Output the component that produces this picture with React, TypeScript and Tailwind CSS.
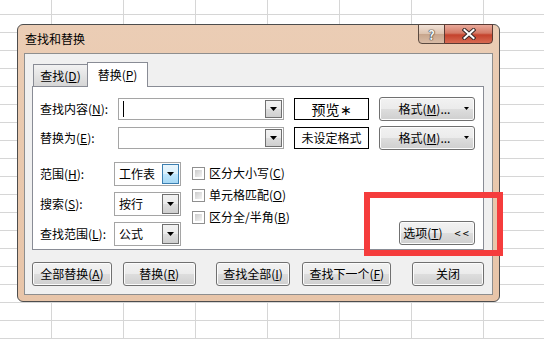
import React from "react";

const btnBase =
  "flex h-[24px] items-center justify-center rounded-[3px] border border-[#707070] bg-[linear-gradient(to_bottom,#f2f2f2_0%,#ebebeb_50%,#dddddd_51%,#cfcfcf_100%)] text-[12px] leading-none text-black shadow-[inset_0_0_0_1px_#fcfcfc]";

function DropArrow({ blue = false }: { blue?: boolean }) {
  return (
    <div
      className={
        blue
          ? "flex w-[17px] items-center justify-center border border-[#3c7fb1] bg-[linear-gradient(to_bottom,#eaf6fd_0%,#d9f0fc_50%,#bee6fd_51%,#a7d9f5_100%)]"
          : "flex w-[17px] items-center justify-center border border-[#707070] bg-[linear-gradient(to_bottom,#f2f2f2_0%,#ebebeb_50%,#dddddd_51%,#cfcfcf_100%)]"
      }
    >
      <svg width="7" height="4" viewBox="0 0 7 4">
        <path d="M0 0h7L3.5 4z" fill="#000" />
      </svg>
    </div>
  );
}

function Combo({ cursor = false }: { cursor?: boolean }) {
  return (
    <div className="flex h-[22px] w-[167px] border border-[#a5a5a5] bg-white p-px">
      <div className="flex flex-1 items-center pl-[3px]">
        {cursor && <div className="h-[16px] w-px bg-black" />}
      </div>
      <DropArrow />
    </div>
  );
}

function Select({ value, blue = false }: { value: string; blue?: boolean }) {
  return (
    <div className="flex h-[24px] w-[67px] border border-[#a5a5a5] bg-white p-px">
      <div className="flex flex-1 items-center pl-[3px] text-[12px] leading-none">{value}</div>
      <DropArrow blue={blue} />
    </div>
  );
}

function Check({ label, k }: { label: string; k: string }) {
  return (
    <div className="flex h-[22px] items-center gap-[4px] text-[12px] leading-none">
      <div className="h-[13px] w-[13px] border border-[#8f8f8f] bg-white p-[2px]">
        <div className="h-full w-full bg-[linear-gradient(135deg,#cbcbcb,#f4f4f4)]" />
      </div>
      <span>
        {label}(<u>{k}</u>)
      </span>
    </div>
  );
}

function FormatBtn() {
  return (
    <div className={btnBase + " relative h-[21px] w-[96px]"}>
      <span className="-ml-[5px]">
        格式(<u>M</u>)...
      </span>
      <svg className="absolute right-[5px] top-[9px]" width="5" height="3" viewBox="0 0 5 3">
        <path d="M0 0h5L2.5 3z" fill="#000" />
      </svg>
    </div>
  );
}

function Dialog() {
  return (
    <div className="flex h-[278px] w-[483px] flex-col rounded-[6px] border border-[#4d4d4d] bg-[linear-gradient(to_bottom,#ebcdb5,#e9c9ae_40%,#e8c5a9)] px-[6px] pb-[6px]">
      <div className="flex h-[28px] items-start justify-between">
        <span className="pl-px pt-[7px] text-[12px] leading-[14px] text-black">查找和替换</span>
        <div className="-mt-px flex h-[20px]">
          <div className="flex w-[27px] items-center justify-center rounded-bl-[4px] border border-[#5b4a40] bg-[linear-gradient(to_bottom,#f1e2d7,#dcc2ae_50%,#c7a58c_51%,#d9bca6)]">
            <span className="text-[13px] font-bold leading-none text-[#f4f4f4] [text-shadow:0_0_1px_#333,0_0_1px_#333,0_0_1px_#333]">
              ?
            </span>
          </div>
          <div className="-ml-px flex w-[49px] items-center justify-center rounded-br-[4px] border border-[#5b3a33] bg-[linear-gradient(to_bottom,#e9a99a,#d47a66_45%,#c4422c_55%,#d86a52)]">
            <svg width="14" height="12" viewBox="0 0 14 12">
              <path d="M2.5 2l9 8M11.5 2l-9 8" stroke="#3a2a28" strokeWidth="4" strokeLinecap="square" />
              <path d="M2.5 2l9 8M11.5 2l-9 8" stroke="#fff" strokeWidth="2" strokeLinecap="square" />
            </svg>
          </div>
        </div>
      </div>

      <div className="flex flex-1 flex-col border border-[#8e8e8e] bg-[#f0f0f0] pl-[7px] pr-[8px] pt-[8px]">
        <div className="flex h-[24px] items-end">
          <div className="ml-px flex h-[22px] w-[55px] items-center justify-center border border-b-0 border-[#898c95] bg-[linear-gradient(to_bottom,#f2f2f2,#e4e4e4_50%,#d6d6d6)] text-[12px] leading-none">
            查找(<u>D</u>)
          </div>
          <div className="relative z-10 -mb-px -ml-px flex h-[25px] w-[61px] items-center justify-center border border-b-0 border-[#898c95] bg-white pb-px text-[12px] leading-none">
            替换(<u>P</u>)
          </div>
        </div>

        <div className="flex h-[164px] flex-col border border-[#898c95] bg-white pl-[7px] pr-[8px] pt-[10px] text-[12px] leading-none text-black">
          <div className="flex items-center">
            <span className="w-[78px]">
              查找内容(<u>N</u>):
            </span>
            <Combo cursor />
            <div className="ml-[10px] flex h-[22px] w-[75px] items-center justify-center border border-black text-[14px]">
              预览∗
            </div>
            <div className="ml-[10px]">
              <FormatBtn />
            </div>
          </div>
          <div className="mt-[5px] flex items-center">
            <span className="w-[78px]">
              替换为(<u>E</u>):
            </span>
            <Combo />
            <div className="ml-[10px] flex h-[22px] w-[75px] items-center justify-center border border-black">
              未设定格式
            </div>
            <div className="ml-[10px]">
              <FormatBtn />
            </div>
          </div>

          <div className="mt-[12px] flex flex-1 pb-[7px]">
            <div className="flex flex-col gap-[6px]">
              <div className="flex items-center">
                <span className="w-[74px]">
                  范围(<u>H</u>):
                </span>
                <Select value="工作表" blue />
              </div>
              <div className="flex items-center">
                <span className="w-[74px]">
                  搜索(<u>S</u>):
                </span>
                <Select value="按行" />
              </div>
              <div className="flex items-center">
                <span className="w-[74px]">
                  查找范围(<u>L</u>):
                </span>
                <Select value="公式" />
              </div>
            </div>
            <div className="ml-[11px] flex flex-col">
              <Check label="区分大小写" k="C" />
              <Check label="单元格匹配" k="O" />
              <Check label="区分全/半角" k="B" />
            </div>
            <div className="flex flex-1 items-end justify-end">
              <div className={btnBase + " mb-px w-[76px] gap-[12px]"}>
                <span>
                  选项(<u>T</u>)
                </span>
                <span className="tracking-[2px] text-[11px]">&lt;&lt;</span>
              </div>
            </div>
          </div>
        </div>

        <div className="mt-[12px] flex">
          <div className={btnBase + " w-[80px]"}>
            全部替换(<u>A</u>)
          </div>
          <div className={btnBase + " ml-[11px] w-[73px]"}>
            替换(<u>R</u>)
          </div>
          <div className={btnBase + " ml-[20px] w-[75px]"}>
            查找全部(<u>I</u>)
          </div>
          <div
            className={
              btnBase +
              " ml-[12px] w-[89px] border-[#3c7fb1] shadow-[inset_0_0_0_1px_#9fdcf7]"
            }
          >
            查找下一个(<u>F</u>)
          </div>
          <div className={btnBase + " ml-[21px] w-[72px]"}>关闭</div>
        </div>
      </div>
    </div>
  );
}

export default function App() {
  return (
    <div className="relative h-[339px] w-[544px] overflow-hidden bg-white bg-[linear-gradient(to_right,#d6d6d6_1px,transparent_1px),linear-gradient(to_bottom,#d6d6d6_1px,transparent_1px)] bg-[size:72px_18px] bg-[position:51px_14px] pl-[17px] pt-[24px] font-['Noto_Sans_CJK_SC','Noto_Sans',sans-serif]">
      <Dialog />
      <div className="absolute left-[364px] top-[192px] h-[64px] w-[139px] border-[6px] border-[#f53c3c]" />
    </div>
  );
}
